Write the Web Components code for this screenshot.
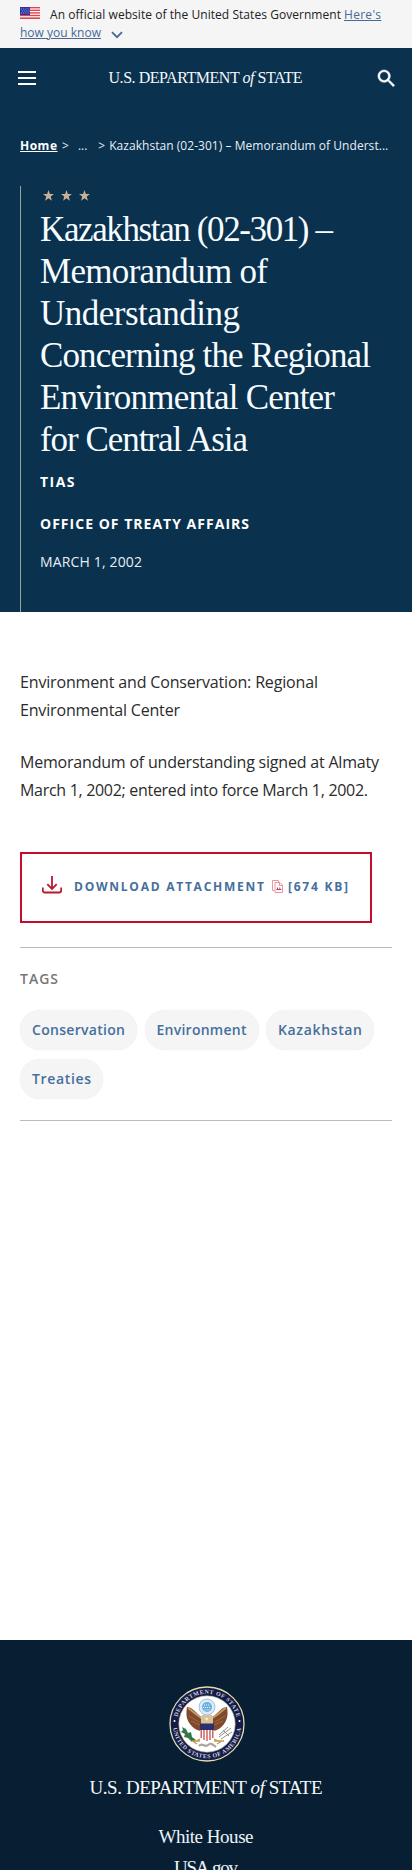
<!DOCTYPE html>
<html lang="en"><head><meta charset="utf-8"><title>Kazakhstan (02-301)</title>
<style>body{margin:0;background:#fff;font-family:"Open Sans",sans-serif;height:1870px;overflow:hidden}</style></head><body>
<state-page></state-page>
<script>
const define=(name,html)=>customElements.define(name,class extends HTMLElement{
  connectedCallback(){ if(!this.shadowRoot) this.attachShadow({mode:'open'}).innerHTML=html; }
});
// A line of text whose tracking is adjusted so that it spans the "w" attribute.
customElements.define('fit-line',class extends HTMLElement{
  connectedCallback(){
    if(this.shadowRoot) return;
    this.attachShadow({mode:'open'}).innerHTML='<style>:host{display:inline-block;white-space:pre;font-variant-ligatures:none;letter-spacing:0}:host([u]){text-decoration:underline}</style><slot></slot>';
    const natural=this.getBoundingClientRect().width, w=+this.getAttribute('w'), n=this.textContent.length;
    const ls=(w-natural)/(n-1);
    this.style.letterSpacing=ls+'px'; this.style.marginRight=-ls+'px';
  }
});
define('gov-banner',`<style>
:host{display:block;box-sizing:border-box;height:48px;background:#f5f5f5;color:#222;font-size:12px;line-height:18px;padding:6px 20px 0}
div{display:flex;align-items:center;height:18px}
a{color:#456a96}
.flag{margin-right:10px;margin-top:-4px}.a{margin-left:3px}.c{margin-left:10px;margin-top:3px}</style>
<div><svg class="flag" width="20" height="12" viewBox="0 0 20 12"><rect width="20" height="12" fill="#fff"/><g fill="#e0434d"><rect width="20" height="1.4"/><rect y="2.6" width="20" height="1.4"/><rect y="5.2" width="20" height="1.4"/><rect y="7.8" width="20" height="1.4"/><rect y="10.4" width="20" height="1.6"/></g><rect width="10" height="8" fill="#2b36a0"/><path d="M1 2h8M2 4h8M1 6h8" stroke="#b8bbef" stroke-width=".8" stroke-dasharray="1 1.2"/></svg><fit-line w="291">An official website of the United States Government</fit-line><a class="a"><fit-line u w="37">Here's</fit-line></a></div>
<div><a><fit-line u w="81">how you know</fit-line></a><svg class="c" width="12" height="8" viewBox="0 0 12 8"><path d="M1 1.2l5 5 5-5" fill="none" stroke="#456a96" stroke-width="1.8"/></svg></div>`);
define('word-mark',`<style>:host{display:block;font-family:"Liberation Serif",serif;color:#f4f9fc;white-space:pre}</style><slot></slot>`);
define('site-header',`<style>
:host{display:flex;box-sizing:border-box;height:60px;align-items:center;padding:0 14px 0 18px;justify-content:space-between}
word-mark{font-size:16px;line-height:20px}</style>
<svg width="18" height="14" viewBox="0 0 18 14"><path d="M0 1h18M0 7h18M0 13h18" stroke="#fff" stroke-width="2"/></svg>
<word-mark><fit-line w="194">U.S. DEPARTMENT <i>of</i> STATE</fit-line></word-mark>
<svg width="23" height="23" viewBox="0 0 24 24"><path fill="#fff" stroke="#fff" stroke-width=".5" d="M15.5 14h-.79l-.28-.27A6.471 6.471 0 0 0 16 9.5 6.5 6.5 0 1 0 9.5 16c1.61 0 3.09-.59 4.23-1.57l.27.28v.79l5 4.99L20.49 19l-4.99-5zm-6 0C7.01 14 5 11.99 5 9.5S7.01 5 9.5 5 14 7.01 14 9.5 11.99 14 9.5 14z"/></svg>`);
define('bread-crumbs',`<style>
:host{display:flex;font-size:12px;line-height:18px;height:17px;color:#e6eff6;padding:29px 20px 0}
b{color:#fff}.s{margin-left:5px}.d{margin-left:9px}.e{margin-left:11px}.t{margin-left:4px}</style>
<b><fit-line u w="37">Home</fit-line></b><span class="s">&gt;</span><span class="d">...</span><span class="e">&gt;</span><span class="t"><fit-line w="279">Kazakhstan (02-301) – Memorandum of Underst...</fit-line></span>`);
define('star-row',`<style>:host{display:flex;gap:7px;height:11px;padding-left:3px}</style>`+
'<svg width="11" height="11" viewBox="0 0 10 10"><path fill="#cbb194" d="M5 0l1.25 3.55L10 3.7 7.05 6 8.1 9.7 5 7.6 1.9 9.7 2.95 6 0 3.7l3.75-.15z"/></svg>'.repeat(3));
define('article-hero',`<style>
:host{display:block;box-sizing:border-box;height:426px;margin:32px 0 0 20px;border-left:1px solid #94a59f;padding:4px 0 0 19px;color:#fff}
h1{margin:8px 0 0;font:400 35px/42px "Liberation Serif",serif;display:flex;flex-direction:column;align-items:flex-start;color:#f6fcff}
p{margin:0;font-size:14px;line-height:20px;height:20px;font-weight:700}
.a{margin-top:11px}.b{margin-top:22px}.c{margin-top:18px;font-weight:400;color:#e6eff6}</style>
<star-row></star-row>
<h1><fit-line w="293">Kazakhstan (02-301) –</fit-line><fit-line w="228">Memorandum of</fit-line><fit-line w="200">Understanding</fit-line><fit-line w="331">Concerning the Regional</fit-line><fit-line w="295">Environmental Center</fit-line><fit-line w="208">for Central Asia</fit-line></h1>
<p class="a"><fit-line w="34.5">TIAS</fit-line></p><p class="b"><fit-line w="209">OFFICE OF TREATY AFFAIRS</fit-line></p><p class="c"><fit-line w="102">MARCH 1, 2002</fit-line></p>`);
define('article-body',`<style>:host{display:block;padding:56px 20px 0;font-size:16px;line-height:28px;color:#2b2b2b}
p{margin:0 0 24px;display:flex;flex-direction:column;align-items:flex-start}</style>
<p><fit-line w="298">Environment and Conservation: Regional</fit-line><fit-line w="160">Environmental Center</fit-line></p>
<p><fit-line w="359">Memorandum of understanding signed at Almaty</fit-line><fit-line w="348">March 1, 2002; entered into force March 1, 2002.</fit-line></p>`);
define('download-box',`<style>
:host{display:flex;box-sizing:border-box;width:352px;height:71px;margin:48px 0 0 20px;border:2px solid #c40d2e;padding:0 0 1px 20px;align-items:center;color:#456f9d;font-size:12px;font-weight:700;line-height:18px}
.t{margin-left:12px}.p{margin:-2px 5px 0 8px}.d{margin-top:-5px}</style>
<svg class="d" width="20" height="18" viewBox="0 0 20 18" fill="none" stroke="#b81830" stroke-width="1.8"><path d="M10 0v12.5M5.3 8.2l4.7 4.7 4.7-4.7M.8 11.5v3a2 2 0 0 0 2 2h14.4a2 2 0 0 0 2-2v-3"/></svg>
<span class="t"><fit-line w="190">DOWNLOAD ATTACHMENT</fit-line></span>
<svg class="p" width="11" height="13" viewBox="0 0 11 13" fill="none" stroke="#e47c87"><path d="M2.5 10.5h-2V.5h6v2M3 2.5h5l2.5 2.5v7.5H3zM7.5 2.5v3h3" stroke-width=".8"/><path d="M4.3 9.5h5M5.5 7.5v2.5M7.8 7.5v2.5" stroke="#cb3c50"/></svg>
<span><fit-line w="60">[674 KB]</fit-line></span>`);
define('tag-pill',`<style>:host{display:flex;box-sizing:border-box;height:40px;align-items:center;padding:0 12px;border-radius:20px;background:#f5f5f5;box-shadow:0 0 1px #e4e4e4;color:#456f9d;font-weight:600;font-size:14px;line-height:20px}</style><slot></slot>`);
define('tag-list',`<style>
:host{display:block;box-sizing:border-box;height:174px;margin:24px 20px 0;border-top:1px solid #bbb;border-bottom:1px solid #bbb;padding-top:21px}
h2{margin:0;font-size:14px;line-height:20px;height:20px;font-weight:600;color:#777}
div{display:flex;flex-wrap:wrap;gap:9px 7.5px;margin-top:21px}</style>
<h2><fit-line w="38">TAGS</fit-line></h2><div><tag-pill><fit-line w="93">Conservation</fit-line></tag-pill><tag-pill><fit-line w="90">Environment</fit-line></tag-pill><tag-pill><fit-line w="84">Kazakhstan</fit-line></tag-pill><tag-pill><fit-line w="59">Treaties</fit-line></tag-pill></div>`);
define('state-seal',`<style>:host{display:block;width:76px;height:76px}text{font:700 6px "Liberation Serif",serif;fill:#d3d6df}</style>
<svg width="76" height="76" viewBox="0 0 76 76"><defs><path id="top" d="M7.8 38a30.2 30.2 0 0 1 60.4 0"/><path id="low" d="M3.8 38a34.2 34.2 0 0 0 68.4 0"/></defs>
<circle cx="38" cy="38" r="37" fill="#141b48" stroke="#dfdcad" stroke-width="1.3"/><circle cx="38" cy="38" r="28.2" fill="#fff" stroke="#b9b28b" stroke-width=".6"/>
<text><textPath href="#top" startOffset="7" textLength="81">DEPARTMENT OF STATE</textPath></text><text><textPath href="#low" startOffset="4" textLength="99">UNITED STATES OF AMERICA</textPath></text>
<circle cx="5.5" cy="35" r="1" fill="#fff"/><circle cx="70.5" cy="35" r="1" fill="#fff"/>
<circle cx="38" cy="21" r="8" fill="#dcebf7" stroke="#9cc6e5" stroke-width="1"/><circle cx="38" cy="21" r="5" fill="#6caedc"/><path d="M35 19h6M34 21.5h8M35.5 24h5" stroke="#e8f4ff" stroke-dasharray="1 1"/>
<path d="M34 31C29 31 25 21 18 21c-1 6-1 12 3 17 3 4 7 7 12 7zM42 31c5 0 9-10 16-10 1 6 1 12-3 17-3 4-7 7-12 7z" fill="#80492c"/>
<path d="M19 22c5 3 9 8 14 10M57 22c-5 3-9 8-14 10" stroke="#c29b67" stroke-width="2" fill="none"/>
<path d="M20 30l10 6M22 35l9 4M56 30l-10 6M54 35l-9 4" stroke="#aa7048" stroke-width=".8"/>
<path d="M32 33c-2-3 2-5 6-4 3-2 6 0 6 3v6H32z" fill="#d9c29b"/><path d="M36 32h3l-1 3z" fill="#fff5d9"/>
<path d="M31 38h14v12c0 4-4 5-7 6-3-1-7-2-7-6z" fill="#fff"/><path d="M32.2 42v10M35 42v12M38 42v13M41 42v12M43.8 42v10" stroke="#c84c50" stroke-width="1.3"/><path d="M31 37.5h14V44H31z" fill="#29306b"/>
<path d="M31 53l-6 3 3 2M45 53l6 3-3 2M22 55h9M45 55h10" stroke="#c29b55" stroke-width="1.3" fill="none"/>
<path d="M13 41l4 2 2 4 3-1 1 5 4 3-5 1-3-3-4-1 1-3-4-2 2-2z" fill="#37754b"/>
<path d="M50 51l12-9M50 49l9-8M52 53l11-7M54 44l6 6" stroke="#979292" stroke-width="1"/>
<path d="M30 60c3-4 6 2 9-1s5 0 8 2" stroke="#aaa69b" stroke-width="2.2" fill="none"/></svg>`);
define('site-footer',`<style>
:host{display:flex;flex-direction:column;align-items:center;height:230px;overflow:hidden;background:#081f33;margin-top:519px;color:#e9f3f8;font-family:"Liberation Serif",serif}
state-seal{margin-top:46px;margin-left:1px}word-mark{font-size:19px;line-height:24px;margin-top:14px}
a{font-size:19px;line-height:31px;height:31px}.f{margin-top:21px}</style>
<state-seal></state-seal><word-mark><fit-line w="233">U.S. DEPARTMENT <i>of</i> STATE</fit-line></word-mark>
<a class="f"><fit-line w="95">White House</fit-line></a><a><fit-line w="64">USA.gov</fit-line></a>`);
define('state-page',`<style>:host{display:block;width:412px}header{background:#0a314d}</style>
<gov-banner></gov-banner><header><site-header></site-header><bread-crumbs></bread-crumbs><article-hero></article-hero></header>
<main><article-body></article-body><download-box></download-box><tag-list></tag-list></main><site-footer></site-footer>`);
</script></body></html>
